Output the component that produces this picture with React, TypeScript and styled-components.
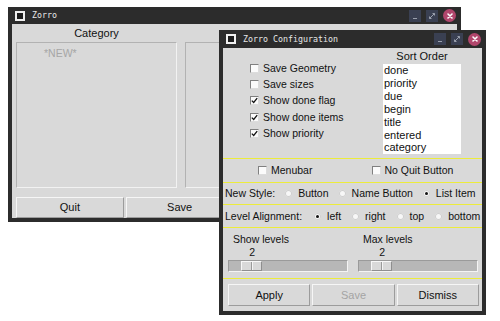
import * as React from 'react';
import styled, { createGlobalStyle } from 'styled-components';

const GlobalStyle = createGlobalStyle`
  html, body {
    margin: 0;
    padding: 0;
    background: #ffffff;
  }
  body {
    width: 500px;
    height: 321px;
    overflow: hidden;
    font-family: "Liberation Sans", Arial, sans-serif;
    font-size: 10.5px;
    line-height: 13px;
    color: #111;
  }
`;

const sortOrder = ['done', 'priority', 'due', 'begin', 'title', 'entered', 'category'];

const options = [
    { label: 'Save Geometry', checked: false },
    { label: 'Save sizes', checked: false },
    { label: 'Show done flag', checked: true },
    { label: 'Show done items', checked: true },
    { label: 'Show priority', checked: true },
];

const newStyles = [
    { label: 'Button', selected: false },
    { label: 'Name Button', selected: false },
    { label: 'List Item', selected: true },
];

const alignments = [
    { label: 'left', selected: true },
    { label: 'right', selected: false },
    { label: 'top', selected: false },
    { label: 'bottom', selected: false },
];

const Desktop = styled.div`
  position: relative;
  width: 500px;
  height: 321px;
  background: #ffffff;
`;

const Window = styled.div<{ $x: number; $y: number; $w: number; $h: number }>`
  position: absolute;
  left: ${p => p.$x}px;
  top: ${p => p.$y}px;
  width: ${p => p.$w}px;
  height: ${p => p.$h}px;
  box-sizing: border-box;
  padding: 0 4px 4px 4px;
  background: #2c2c2c;
  display: flex;
  flex-direction: column;
`;

const TitleBar = styled.div<{ $h: number }>`
  height: ${p => p.$h}px;
  flex: none;
  display: flex;
  align-items: center;
  padding: 0 1px 0 3px;
`;

const TitleIcon = styled.div`
  width: 10px;
  height: 10px;
  box-sizing: border-box;
  border: 2px solid #efefef;
  background: #1d1d1d;
  margin-right: 7px;
`;

const TitleText = styled.div`
  font-family: "DejaVu Sans Mono", "Liberation Mono", monospace;
  font-size: 8.3px;
  color: #e6e6e6;
`;

const WinButtons = styled.div`
  margin-left: auto;
  display: flex;
  align-items: center;
  gap: 5px;
`;

const SquareButton = styled.div`
  width: 12px;
  height: 12px;
  background: #3a4052;
  display: flex;
  align-items: center;
  justify-content: center;
`;

const CloseButton = styled.div`
  width: 13px;
  height: 13px;
  border-radius: 50%;
  background: #b1466c;
  display: flex;
  align-items: center;
  justify-content: center;
`;

const Body = styled.div`
  flex: 1;
  background: #d9d9d9;
  display: flex;
  flex-direction: column;
  min-height: 0;
`;

/* main window */

const MainContent = styled.div`
  flex: 1;
  display: flex;
  flex-direction: column;
  padding: 0 4px 1px 4px;
`;

const Columns = styled.div`
  display: flex;
  gap: 8px;
`;

const Column = styled.div<{ $w?: number }>`
  display: flex;
  flex-direction: column;
  ${p => (p.$w ? `width: ${p.$w}px;` : 'flex: 1;')}
`;

const ColumnHeader = styled.div`
  height: 18px;
  line-height: 18px;
  text-align: center;
  font-size: 11px;
`;

const ListBox = styled.div`
  height: 146px;
  box-sizing: border-box;
  border: 1px solid;
  border-color: #b2b2b2 #f2f2f2 #f2f2f2 #b2b2b2;
  padding: 4px 0 0 27px;
`;

const ListItem = styled.div<{ $muted?: boolean }>`
  line-height: 13px;
  color: ${p => (p.$muted ? '#a6a6a6' : '#111')};
`;

const ButtonRow = styled.div<{ $top: number }>`
  display: flex;
  gap: 2px;
  margin-top: ${p => p.$top}px;
`;

const PushButton = styled.div<{ $disabled?: boolean; $h: number }>`
  flex: 1;
  height: ${p => p.$h}px;
  box-sizing: border-box;
  border: 1px solid;
  border-color: #f6f6f6 #9c9c9c #9c9c9c #f6f6f6;
  display: flex;
  align-items: center;
  justify-content: center;
  font-size: 11px;
  color: ${p => (p.$disabled ? '#a4a4a4' : '#111')};
`;

/* config window */

const TopSection = styled.div`
  height: 110px;
  flex: none;
  display: flex;
`;

const OptionList = styled.div`
  flex: 1;
  display: flex;
  flex-direction: column;
  padding: 12px 0 0 27px;
`;

const CheckRow = styled.label`
  display: flex;
  align-items: center;
  height: 16.4px;
  gap: 4px;
`;

const CheckBox = styled.span`
  width: 9px;
  height: 9px;
  box-sizing: border-box;
  border: 1px solid;
  border-color: #808080 #dcdcdc #dcdcdc #808080;
  background: #fbfbfb;
  display: flex;
  align-items: center;
  justify-content: center;
`;

const SortColumn = styled.div`
  width: 78px;
  margin-right: 21px;
  display: flex;
  flex-direction: column;
`;

const SortHeader = styled.div`
  height: 16px;
  line-height: 16px;
  text-align: center;
  font-size: 11px;
`;

const SortList = styled.div`
  height: 90px;
  background: #ffffff;
  padding-left: 1px;
  font-size: 11px;
  line-height: 12.9px;
  overflow: hidden;
`;

const Section = styled.div<{ $h: number }>`
  height: ${p => p.$h}px;
  flex: none;
  box-sizing: border-box;
  border-top: 1px solid #ecec3c;
`;

const HalfGrid = styled.div`
  height: 100%;
  display: grid;
  grid-template-columns: 1fr 1fr;
  align-items: center;
`;

const HalfCell = styled.div<{ $pad: number }>`
  padding-left: ${p => p.$pad}px;
  display: flex;
`;

const RadioRow = styled.div`
  height: 100%;
  display: flex;
  align-items: center;
  padding-left: 2px;
`;

const RowLabel = styled.span<{ $gap: number }>`
  margin-right: ${p => p.$gap}px;
`;

const RadioItem = styled.label<{ $gap: number }>`
  display: flex;
  align-items: center;
  gap: 6px;
  margin-left: ${p => p.$gap}px;
`;

const Radio = styled.span<{ $on: boolean }>`
  width: 7px;
  height: 7px;
  border-radius: 50%;
  background: #f7f7f7;
  box-shadow: inset 0 0 0 1px #cfcfcf;
  display: flex;
  align-items: center;
  justify-content: center;
  &::after {
    content: '';
    width: 3px;
    height: 3px;
    border-radius: 50%;
    background: ${p => (p.$on ? '#111' : 'transparent')};
  }
`;

const ScaleGrid = styled.div`
  display: grid;
  grid-template-columns: 120px 120px;
  column-gap: 10px;
  padding: 4px 0 0 5px;
`;

const ScaleBox = styled.div`
  display: flex;
  flex-direction: column;
`;

const ScaleLabel = styled.div`
  height: 14px;
  line-height: 14px;
  padding-left: 5px;
`;

const ScaleValueRow = styled.div`
  position: relative;
  height: 12px;
  line-height: 12px;
`;

const ScaleValue = styled.span`
  position: absolute;
  top: 0;
  transform: translateX(-50%);
`;

const Trough = styled.div`
  position: relative;
  margin-top: 2px;
  height: 12px;
  box-sizing: border-box;
  border: 1px solid;
  border-color: #9a9a9a #f4f4f4 #f4f4f4 #9a9a9a;
  background: #b7b7b7;
`;

const Handle = styled.div`
  position: absolute;
  top: 0;
  width: 21px;
  height: 10px;
  box-sizing: border-box;
  border: 1px solid;
  border-color: #f8f8f8 #8e8e8e #8e8e8e #f8f8f8;
  background: #d9d9d9;
  &::after {
    content: '';
    position: absolute;
    left: 9px;
    top: 0;
    width: 1px;
    height: 8px;
    background: #9a9a9a;
    box-shadow: 1px 0 0 #f4f4f4;
  }
`;

const ConfigButtons = styled.div`
  padding: 5px 3px 0 5px;
`;

const Check = () => (
    <svg width="7" height="7" viewBox="0 0 7 7">
        <path d="M0.8 3.6 L2.7 5.5 L6.2 1.2" fill="none" stroke="#111" strokeWidth="1.3" />
    </svg>
);

const TitleButtons: React.FC = () => (
    <WinButtons>
        <SquareButton>
            <svg width="8" height="8" viewBox="0 0 8 8">
                <rect x="2" y="6" width="4" height="1" fill="#9aa0ad" />
            </svg>
        </SquareButton>
        <SquareButton>
            <svg width="8" height="8" viewBox="0 0 8 8">
                <path d="M4.5 1.5 H6.5 V3.5 M3.5 6.5 H1.5 V4.5 M6.5 1.5 L1.5 6.5" fill="none" stroke="#9aa0ad" strokeWidth="1" />
            </svg>
        </SquareButton>
        <CloseButton>
            <svg width="8" height="8" viewBox="0 0 8 8">
                <path d="M2 2 L6 6 M6 2 L2 6" stroke="#fff" strokeWidth="1.6" strokeLinecap="round" />
            </svg>
        </CloseButton>
    </WinButtons>
);

const Scale: React.FC<{ label: string; value: number; from: number; to: number }> = ({ label, value, from, to }) => {
    const inner = 118;
    const handle = 21;
    const left = ((value - from) / (to - from)) * (inner - handle) + 1;
    return (
        <ScaleBox>
            <ScaleLabel>{label}</ScaleLabel>
            <ScaleValueRow>
                <ScaleValue style={{ left: left + handle / 2 + 2 }}>{value}</ScaleValue>
            </ScaleValueRow>
            <Trough>
                <Handle style={{ left }} />
            </Trough>
        </ScaleBox>
    );
};

const App: React.FC = () => {
    return (
        <Desktop>
            <GlobalStyle />
            <Window $x={8} $y={7} $w={453} $h={215}>
                <TitleBar $h={17}>
                    <TitleIcon />
                    <TitleText>Zorro</TitleText>
                    <TitleButtons />
                </TitleBar>
                <Body>
                    <MainContent>
                        <Columns>
                            <Column $w={161}>
                                <ColumnHeader>Category</ColumnHeader>
                                <ListBox>
                                    <ListItem $muted>*NEW*</ListItem>
                                </ListBox>
                            </Column>
                            <Column>
                                <ColumnHeader />
                                <ListBox />
                            </Column>
                        </Columns>
                        <ButtonRow $top={9}>
                            <PushButton $h={21}>Quit</PushButton>
                            <PushButton $h={21}>Save</PushButton>
                            <PushButton $h={21} />
                            <PushButton $h={21} />
                        </ButtonRow>
                    </MainContent>
                </Body>
            </Window>

            <Window $x={219} $y={30} $w={267} $h={285}>
                <TitleBar $h={18}>
                    <TitleIcon />
                    <TitleText>Zorro Configuration</TitleText>
                    <TitleButtons />
                </TitleBar>
                <Body>
                    <TopSection>
                        <OptionList>
                            {options.map(o => (
                                <CheckRow key={o.label}>
                                    <CheckBox>{o.checked && <Check />}</CheckBox>
                                    {o.label}
                                </CheckRow>
                            ))}
                        </OptionList>
                        <SortColumn>
                            <SortHeader>Sort Order</SortHeader>
                            <SortList>
                                {sortOrder.map(s => (
                                    <div key={s}>{s}</div>
                                ))}
                            </SortList>
                        </SortColumn>
                    </TopSection>

                    <Section $h={24}>
                        <HalfGrid>
                            <HalfCell $pad={35}>
                                <CheckRow>
                                    <CheckBox />
                                    Menubar
                                </CheckRow>
                            </HalfCell>
                            <HalfCell $pad={19}>
                                <CheckRow>
                                    <CheckBox />
                                    No Quit Button
                                </CheckRow>
                            </HalfCell>
                        </HalfGrid>
                    </Section>

                    <Section $h={22}>
                        <RadioRow>
                            <RowLabel $gap={0}>New Style:</RowLabel>
                            {newStyles.map(r => (
                                <RadioItem key={r.label} $gap={10}>
                                    <Radio $on={r.selected} />
                                    {r.label}
                                </RadioItem>
                            ))}
                        </RadioRow>
                    </Section>

                    <Section $h={23}>
                        <RadioRow>
                            <RowLabel $gap={1}>Level Alignment:</RowLabel>
                            {alignments.map(r => (
                                <RadioItem key={r.label} $gap={11}>
                                    <Radio $on={r.selected} />
                                    {r.label}
                                </RadioItem>
                            ))}
                        </RadioRow>
                    </Section>

                    <Section $h={51}>
                        <ScaleGrid>
                            <Scale label="Show levels" value={2} from={1} to={10} />
                            <Scale label="Max levels" value={2} from={1} to={10} />
                        </ScaleGrid>
                    </Section>

                    <Section $h={32}>
                        <ConfigButtons>
                            <ButtonRow $top={0}>
                                <PushButton $h={22}>Apply</PushButton>
                                <PushButton $h={22} $disabled>Save</PushButton>
                                <PushButton $h={22}>Dismiss</PushButton>
                            </ButtonRow>
                        </ConfigButtons>
                    </Section>
                </Body>
            </Window>
        </Desktop>
    );
};

export default App;
